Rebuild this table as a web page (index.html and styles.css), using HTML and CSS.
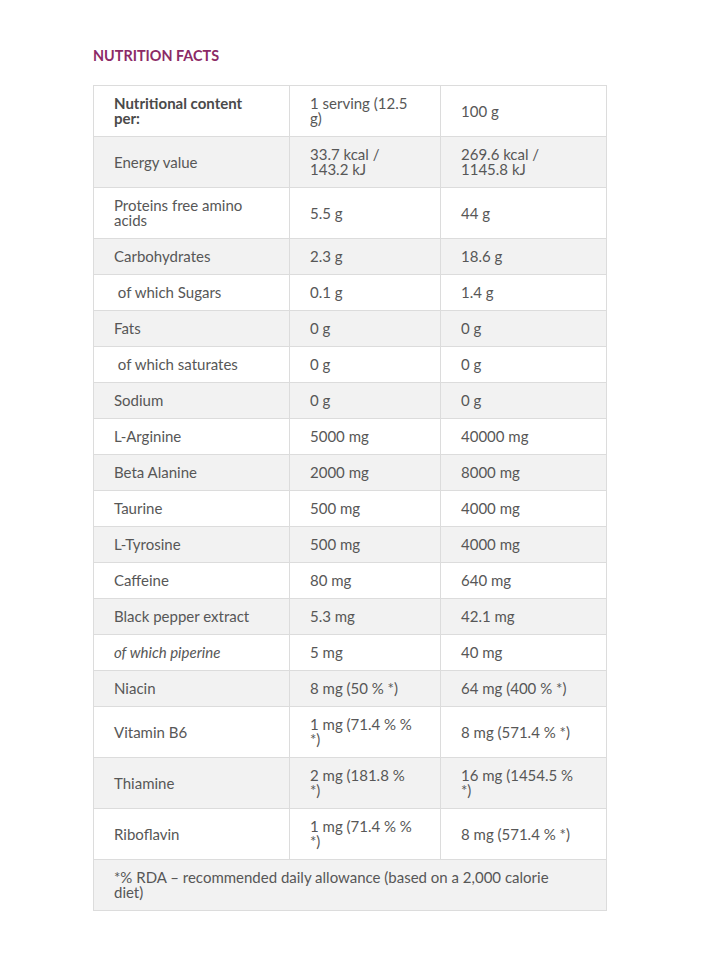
FILE: index.html
```html
<!DOCTYPE html>
<html>
<head>
<meta charset="utf-8">
<link rel="stylesheet" href="styles.css">
</head>
<body>
<div class="page">
  <h2 class="title">NUTRITION FACTS</h2>
  <table class="facts">
    <colgroup><col class="c1"><col class="c2"><col class="c3"></colgroup>
    <tbody>
      <tr><td class="head">Nutritional content per:</td><td>1 serving (12.5 g)</td><td>100 g</td></tr>
      <tr><td>Energy value</td><td>33.7 kcal / 143.2 kJ</td><td>269.6 kcal / 1145.8 kJ</td></tr>
      <tr><td>Proteins free amino acids</td><td>5.5 g</td><td>44 g</td></tr>
      <tr><td>Carbohydrates</td><td>2.3 g</td><td>18.6 g</td></tr>
      <tr><td>&nbsp;of which Sugars</td><td>0.1 g</td><td>1.4 g</td></tr>
      <tr><td>Fats</td><td>0 g</td><td>0 g</td></tr>
      <tr><td>&nbsp;of which saturates</td><td>0 g</td><td>0 g</td></tr>
      <tr><td>Sodium</td><td>0 g</td><td>0 g</td></tr>
      <tr><td>L-Arginine</td><td>5000 mg</td><td>40000 mg</td></tr>
      <tr><td>Beta Alanine</td><td>2000 mg</td><td>8000 mg</td></tr>
      <tr><td>Taurine</td><td>500 mg</td><td>4000 mg</td></tr>
      <tr><td>L-Tyrosine</td><td>500 mg</td><td>4000 mg</td></tr>
      <tr><td>Caffeine</td><td>80 mg</td><td>640 mg</td></tr>
      <tr><td>Black pepper extract</td><td>5.3 mg</td><td>42.1 mg</td></tr>
      <tr><td><em>of which piperine</em></td><td>5 mg</td><td>40 mg</td></tr>
      <tr><td>Niacin</td><td>8 mg (50 % *)</td><td>64 mg (400 % *)</td></tr>
      <tr><td>Vitamin B6</td><td>1 mg (71.4 % % *)</td><td>8 mg (571.4 % *)</td></tr>
      <tr><td>Thiamine</td><td>2 mg (181.8 % *)</td><td>16 mg (1454.5 % *)</td></tr>
      <tr><td>Riboflavin</td><td>1 mg (71.4 % % *)</td><td>8 mg (571.4 % *)</td></tr>
      <tr><td class="note" colspan="3">*% RDA – recommended daily allowance (based on a 2,000 calorie diet)</td></tr>
    </tbody>
  </table>
</div>
</body>
</html>
```
FILE: styles.css
```css
html, body {
  margin: 0;
  padding: 0;
  background: #ffffff;
}
.page {
  padding: 47px 0 40px 93px;
  font-family: Lato, "Liberation Sans", sans-serif;
  color: #575757;
}
.title {
  margin: 0 0 20px 0;
  font-size: 14.4px;
  line-height: 18px;
  font-weight: 700;
  color: #8c2a66;
}
.facts {
  width: 513px;
  border-collapse: collapse;
  table-layout: fixed;
  font-size: 15px;
  line-height: 15px;
}
.c1 { width: 196px; }
.c2 { width: 151px; }
.c3 { width: 166px; }
.facts td {
  border: 1px solid #dcdcdc;
  padding: 10px 26px 10px 20px;
  vertical-align: middle;
}
.facts tr:nth-child(even) td {
  background: #f2f2f2;
}
.facts td.head {
  font-weight: 700;
  color: #4a4a4a;
}
.facts td.note {
  padding-right: 40px;
}
```
